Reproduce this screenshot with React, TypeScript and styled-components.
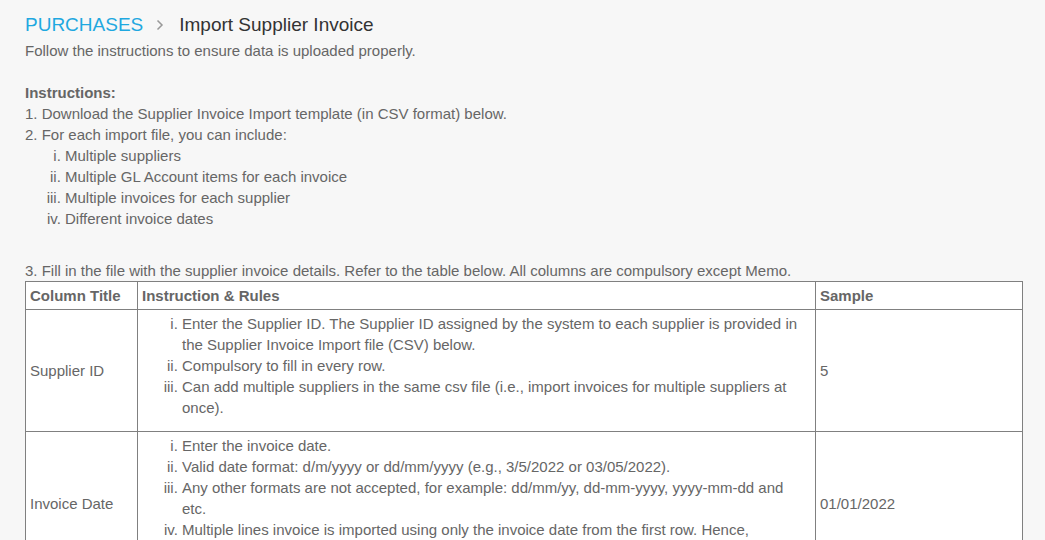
import React from "react";
import styled, { createGlobalStyle } from "styled-components";

const Global = createGlobalStyle`
  html, body { margin: 0; padding: 0; background: #f7f7f7; }
  body { font-family: "Liberation Sans", Arial, sans-serif; font-size: 15px; color: #666; line-height: 21px; }
`;

const Page = styled.div`
  padding: 12px 22px 0 25px;
`;

const Breadcrumb = styled.div`
  display: flex;
  align-items: center;
  font-size: 19px;
  line-height: 26px;
  margin-bottom: 2px;
`;

const Crumb = styled.span`
  color: #1fa8e0;
`;

const Sep = styled.span`
  display: inline-flex;
  margin: 0 15px 0 13px;
`;

const Current = styled.span`
  color: #333;
`;

const Para = styled.p<{ $mb?: number }>`
  margin: 0 0 ${(p) => p.$mb ?? 0}px;
`;

const Bold = styled.p`
  margin: 0;
  font-weight: bold;
`;

const Roman = styled.ol<{ $mb?: number }>`
  list-style-type: lower-roman;
  margin: 0 0 ${(p) => p.$mb ?? 0}px;
  padding-left: 40px;
`;

const Table = styled.table`
  width: 100%;
  border-collapse: collapse;
  table-layout: fixed;
  background: #fff;
`;

const Th = styled.th<{ $w?: number }>`
  box-sizing: border-box;
  border: 1px solid #808080;
  padding: 3px 4px;
  text-align: left;
  font-weight: bold;
  width: ${(p) => (p.$w ? `${p.$w}px` : "auto")};
`;

const Td = styled.td`
  border: 1px solid #808080;
  padding: 3px 4px;
  vertical-align: middle;
`;

export default function App() {
  return (
    <>
      <Global />
      <Page>
        <Breadcrumb>
          <Crumb>PURCHASES</Crumb>
          <Sep>
            <svg width="8" height="12" viewBox="0 0 8 12">
              <path d="M1.5 1.5 L6 6 L1.5 10.5" fill="none" stroke="#999" strokeWidth="1.5" />
            </svg>
          </Sep>
          <Current>Import Supplier Invoice</Current>
        </Breadcrumb>
        <Para $mb={21}>Follow the instructions to ensure data is uploaded properly.</Para>
        <Bold>Instructions:</Bold>
        <Para>1. Download the Supplier Invoice Import template (in CSV format) below.</Para>
        <Para>2. For each import file, you can include:</Para>
        <Roman $mb={31}>
          <li>Multiple suppliers</li>
          <li>Multiple GL Account items for each invoice</li>
          <li>Multiple invoices for each supplier</li>
          <li>Different invoice dates</li>
        </Roman>
        <Para>3. Fill in the file with the supplier invoice details. Refer to the table below. All columns are compulsory except Memo.</Para>
        <Table>
          <thead>
            <tr>
              <Th $w={112}>Column Title</Th>
              <Th $w={678}>Instruction &amp; Rules</Th>
              <Th>Sample</Th>
            </tr>
          </thead>
          <tbody>
            <tr>
              <Td>Supplier ID</Td>
              <Td>
                <Roman $mb={10}>
                  <li>Enter the Supplier ID. The Supplier ID assigned by the system to each supplier is provided in the Supplier Invoice Import file (CSV) below.</li>
                  <li>Compulsory to fill in every row.</li>
                  <li>Can add multiple suppliers in the same csv file (i.e., import invoices for multiple suppliers at once).</li>
                </Roman>
              </Td>
              <Td>5</Td>
            </tr>
            <tr>
              <Td>Invoice Date</Td>
              <Td>
                <Roman $mb={10}>
                  <li>Enter the invoice date.</li>
                  <li>Valid date format: d/m/yyyy or dd/mm/yyyy (e.g., 3/5/2022 or 03/05/2022).</li>
                  <li>Any other formats are not accepted, for example: dd/mm/yy, dd-mm-yyyy, yyyy-mm-dd and etc.</li>
                  <li>Multiple lines invoice is imported using only the invoice date from the first row. Hence, subsequent rows of the same invoice will use the same date.</li>
                </Roman>
              </Td>
              <Td>01/01/2022</Td>
            </tr>
          </tbody>
        </Table>
      </Page>
    </>
  );
}
